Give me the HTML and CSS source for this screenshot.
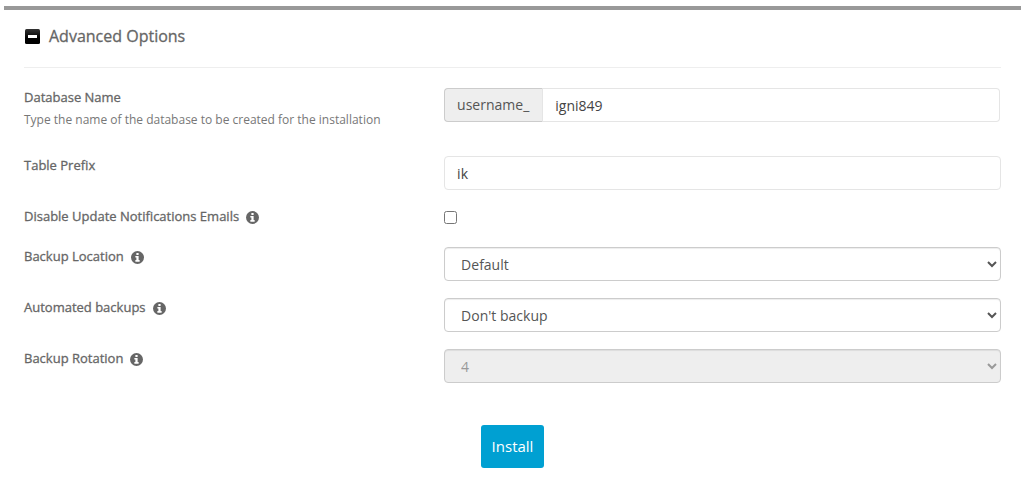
FILE: index.html
```html
<!doctype html>
<html lang="en">
  <head>
    <meta charset="UTF-8" />
    <meta name="viewport" content="width=device-width, initial-scale=1.0" />
    <title>Advanced Options</title>
    <link rel="stylesheet" href="styles.css">
  </head>
  <body>
    <svg class="sprite" aria-hidden="true">
      <symbol id="info" viewBox="0 0 14 14">
        <circle cx="7" cy="7" r="7" fill="currentColor" />
        <path fill="#fff" d="M5.8 2.2h2.4v2H5.8zM4.7 5.3h3.5v4.5h1.1v1.7H4.7V9.8h1.1V6.9H4.7z" />
      </symbol>
    </svg>
    <form class="panel">
      <h2 class="panel-title">
        <button type="button" class="toggle" aria-label="Collapse">
          <svg viewBox="0 0 15 15" width="15" height="15">
            <defs>
              <linearGradient id="shade" x1="0" y1="0" x2="0" y2="1">
                <stop offset="0" stop-color="#333" />
                <stop offset="0.6" stop-color="#000" />
              </linearGradient>
            </defs>
            <rect width="15" height="15" rx="1.5" fill="url(#shade)" />
            <rect x="3" y="6" width="9" height="3" fill="#fff" />
          </svg>
        </button>
        Advanced Options
      </h2>
      <div class="fields">
        <div class="row">
          <div class="caption">
            <label for="dbName">Database Name</label>
            <span class="hint">Type the name of the database to be created for the installation</span>
          </div>
          <div class="input-group">
            <span class="addon">username_</span>
            <input type="text" id="dbName" class="control" value="igni849" />
          </div>
        </div>
        <div class="row">
          <div class="caption"><label for="prefix">Table Prefix</label></div>
          <input type="text" id="prefix" class="control" value="ik" />
        </div>
        <div class="row">
          <div class="caption">
            <label for="disableEmails">Disable Update Notifications Emails</label>
            <svg class="info"><use href="#info" /></svg>
          </div>
          <input type="checkbox" id="disableEmails" class="check" />
        </div>
        <div class="row">
          <div class="caption">
            <label for="location">Backup Location</label>
            <svg class="info"><use href="#info" /></svg>
          </div>
          <select id="location" class="control select">
            <option>Default</option>
          </select>
        </div>
        <div class="row">
          <div class="caption">
            <label for="auto">Automated backups</label>
            <svg class="info"><use href="#info" /></svg>
          </div>
          <select id="auto" class="control select">
            <option>Don't backup</option>
          </select>
        </div>
        <div class="row">
          <div class="caption">
            <label for="rotation">Backup Rotation</label>
            <svg class="info"><use href="#info" /></svg>
          </div>
          <select id="rotation" class="control select" disabled>
            <option>4</option>
          </select>
        </div>
      </div>
      <button type="submit" class="install">Install</button>
    </form>
  </body>
</html>
```
FILE: styles.css
```css
* {
  box-sizing: border-box;
}
body {
  margin: 6px 5px 0 4px;
  background: #fff;
  color: #555;
  font-family: "Open Sans", sans-serif;
  font-size: 14px;
}
.sprite {
  display: none;
}
.panel {
  display: flex;
  flex-direction: column;
  padding: 0 20px;
  border-top: 4px solid #999;
}
.panel-title {
  display: flex;
  align-items: center;
  gap: 9px;
  margin: 0 0 20px;
  padding: 14px 0 18px;
  border-bottom: 1px solid #eee;
  color: #666;
  font-size: 16px;
  font-weight: 500;
  line-height: 25px;
  -webkit-text-stroke: 0.3px;
}
.toggle {
  display: flex;
  margin-left: 1px;
  padding: 0;
  border: 0;
  background: none;
}
.fields {
  display: grid;
  gap: 17px;
}
.row {
  display: grid;
  grid-template-columns: 43% 1fr;
  align-items: start;
}
.caption {
  display: flex;
  flex-wrap: wrap;
  align-items: center;
  column-gap: 7px;
  color: #666;
  font-size: 13px;
  line-height: 18px;
}
.caption label {
  font-weight: 400;
  -webkit-text-stroke: 0.3px;
}
.hint {
  flex-basis: 100%;
  margin: 4px 0 9px;
  color: #777;
  font-size: 12px;
  line-height: 20px;
}
.info {
  width: 13px;
  height: 13px;
  margin-top: 2px;
}
.control {
  width: 100%;
  height: 34px;
  padding: 6px 12px;
  border: 1px solid #e5e5e5;
  border-radius: 4px;
  background: #fff;
  color: #444;
  font: inherit;
}
.select {
  border-color: #ccc;
  box-shadow: inset 0 1px 1px rgba(0, 0, 0, 0.075);
  color: #555;
}
.select:disabled {
  background: #eee;
  color: #999;
  opacity: 1;
}
.input-group {
  display: flex;
  padding-right: 1px;
}
.input-group .control {
  flex: 1;
  border-left: 0;
  border-radius: 0 4px 4px 0;
}
.addon {
  padding: 6px 13px 6px 12px;
  border: 1px solid #ccc;
  border-right-color: #e5e5e5;
  border-radius: 4px 0 0 4px;
  background: #eee;
  line-height: 20px;
}
.check {
  width: 13px;
  height: 13px;
  margin: 4px 0 6px;
}
.install {
  align-self: center;
  margin-top: 42px;
  padding: 11px;
  border: 0;
  border-radius: 3px;
  background: #00a0d2;
  color: #fff;
  font: inherit;
  font-size: 15px;
  line-height: 21px;
}
```
